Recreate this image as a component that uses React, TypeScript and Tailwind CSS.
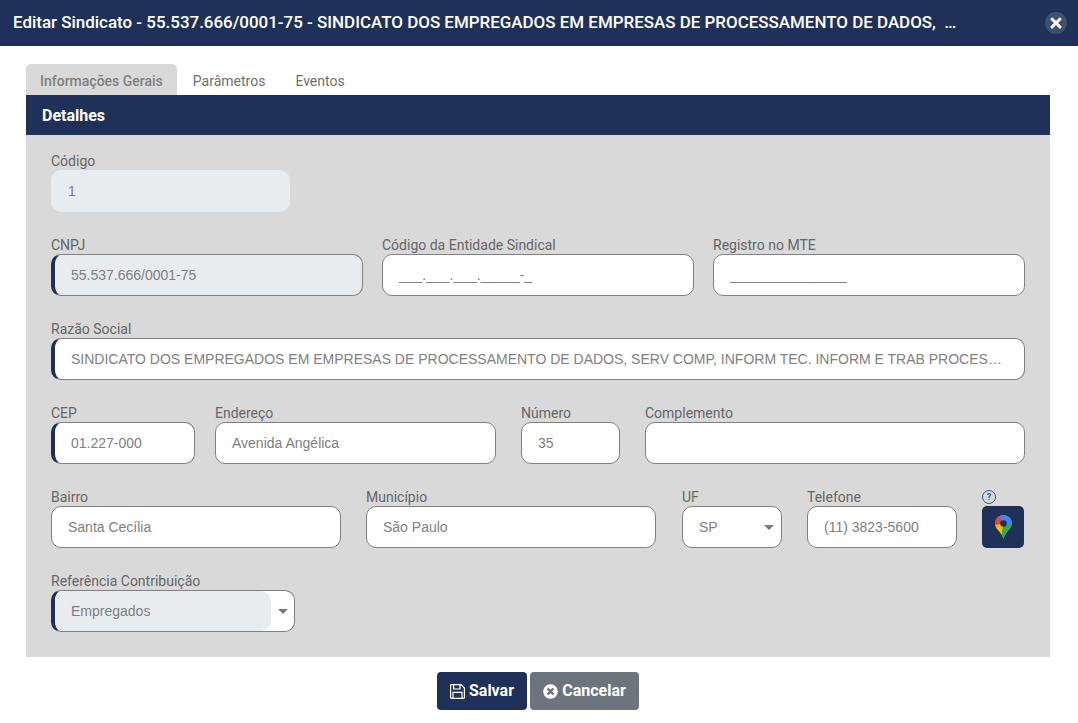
import { X } from "lucide-react";
import { FaTimesCircle } from "react-icons/fa";

const font = { fontFamily: "Roboto, sans-serif" };
const valueFont = "font-['Liberation_Sans',Arial,sans-serif]";

interface FieldProps {
  label: string;
  value?: string;
  width: string;
  required?: boolean;
  disabled?: boolean;
}

const Label = ({ text }: { text: string }) => (
  <label className="h-[20px] text-[14px] leading-[22px] text-[#666666]">{text}</label>
);

const Field = ({ label, value = "", width, required, disabled }: FieldProps) => (
  <div className={`flex flex-col ${width}`}>
    <Label text={label} />
    <input
      readOnly
      value={value}
      className={`h-[42px] w-full rounded-[10px] border border-[#808080] pl-[16px] pr-[22px] text-[14px] text-[#808080] outline-none truncate ${valueFont} ${
        required ? "border-l-4 border-l-[#1f3158]" : ""
      } ${disabled ? "bg-[#e9ecef]" : "bg-white"}`}
    />
  </div>
);

const Caret = () => (
  <span className="h-0 w-0 border-x-[5px] border-t-[5px] border-x-transparent border-t-[#7a7a7a]" />
);

const MapsPin = () => (
  <svg width="17" height="24" viewBox="0 0 17 24">
    <defs>
      <clipPath id="pin">
        <path d="M8.5 0C13.2 0 17 3.8 17 8.5C17 14 11 16 8.5 24C6 16 0 14 0 8.5C0 3.8 3.8 0 8.5 0Z" />
      </clipPath>
    </defs>
    <g clipPath="url(#pin)">
      <rect width="17" height="24" fill="#34a853" />
      <polygon points="2,0 17,0 17,8 8.5,8.5" fill="#4285f4" />
      <polygon points="0,0 4,0 8.5,8.5 0,11" fill="#ea4335" />
      <polygon points="0,10 8.5,8.5 6,24 0,24" fill="#fbbc04" />
      <polygon points="8.5,8.5 13,13 8.5,24 6,24" fill="#34a853" />
    </g>
    <circle cx="8.5" cy="8.5" r="3.3" fill="#1f3158" />
  </svg>
);

const SaveIcon = () => (
  <svg width="15" height="15" viewBox="0 0 15 15" fill="none" stroke="currentColor" strokeWidth="1.2">
    <path d="M1.1 0.6H11L14.4 4V13.4a1 1 0 0 1-1 1H1.6a1 1 0 0 1-1-1V1.1a.5.5 0 0 1 .5-.5Z" />
    <path d="M3.6 0.6V5H10V0.6" />
    <path d="M3 14.4V8.4H12V14.4" />
  </svg>
);

export default function App() {
  return (
    <div className="min-h-[723px] bg-white" style={font}>
      <header className="flex h-[46px] items-center justify-between bg-[#1f3158] pl-[13px] pr-[11px]">
        <h1 className="truncate text-[16.95px] font-medium text-white">
          Editar Sindicato - 55.537.666/0001-75 - SINDICATO DOS EMPREGADOS EM EMPRESAS DE PROCESSAMENTO DE DADOS,{"\u00a0\u00a0"}…
        </h1>
        <button className="flex h-[22px] w-[22px] items-center justify-center rounded-full bg-white/15">
          <X size={16} strokeWidth={4.5} className="text-white" />
        </button>
      </header>

      <main className="pl-[26px] pr-[28px] pt-[18px]">
        <nav className="flex h-[31px] gap-[2px] text-[14px] leading-[35px] text-[#6f6f6f]">
          <span className="rounded-t-[5px] bg-[#d9d9d9] px-[14px] font-medium text-[#808080]">Informações Gerais</span>
          <span className="px-[14px]">Parâmetros</span>
          <span className="px-[14px]">Eventos</span>
        </nav>

        <div className="flex h-[40px] items-center bg-[#1f3158] px-[16px] pt-[2px] text-[16px] font-bold text-white">Detalhes</div>

        <section className="flex flex-col gap-[22px] bg-[#d9d9d9] pb-[25px] pl-[25px] pr-[25px] pt-[15px]">
          <div className="flex w-[239px] flex-col">
            <Label text="Código" />
            <input
              readOnly
              value="1"
              className={`h-[42px] w-full rounded-[10px] bg-[#e9ecef] pl-[17px] text-[14px] text-[#808080] outline-none ${valueFont}`}
            />
          </div>

          <div className="flex gap-[19px]">
            <Field label="CNPJ" value="55.537.666/0001-75" width="w-[312px]" required disabled />
            <Field label="Código da Entidade Sindical" value="___.___.___._____-_" width="w-[312px]" />
            <Field label="Registro no MTE" value="_______________" width="w-[312px]" />
          </div>

          <Field
            label="Razão Social"
            value="SINDICATO DOS EMPREGADOS EM EMPRESAS DE PROCESSAMENTO DE DADOS, SERV COMP, INFORM TEC. INFORM E TRAB PROCESSAMENTO"
            width="w-[974px]"
            required
          />

          <div className="flex">
            <Field label="CEP" value="01.227-000" width="w-[144px] mr-[20px]" required />
            <Field label="Endereço" value="Avenida Angélica" width="w-[281px] mr-[25px]" />
            <Field label="Número" value="35" width="w-[99px] mr-[25px]" />
            <Field label="Complemento" width="w-[380px]" />
          </div>

          <div className="flex">
            <Field label="Bairro" value="Santa Cecília" width="w-[290px] mr-[25px]" />
            <Field label="Município" value="São Paulo" width="w-[290px] mr-[26px]" />
            <div className="mr-[25px] flex w-[100px] flex-col">
              <Label text="UF" />
              <div className={`flex h-[42px] items-center justify-between rounded-[10px] border border-[#808080] bg-white pl-[16px] pr-[7px] text-[14px] text-[#808080] ${valueFont}`}>
                <span>SP</span>
                <Caret />
              </div>
            </div>
            <Field label="Telefone" value="(11) 3823-5600" width="w-[150px] mr-[25px]" />
            <div className="flex w-[42px] flex-col">
              <div className="flex h-[20px] items-center pt-[2px]">
                <span className="flex h-[14px] w-[14px] items-center justify-center rounded-full border border-[#2a5a9a] text-[9px] font-bold leading-none text-[#2a5a9a]">
                  ?
                </span>
              </div>
              <button className="flex h-[42px] w-[42px] items-center justify-center rounded-[5px] bg-[#1f3158]">
                <MapsPin />
              </button>
            </div>
          </div>

          <div className="flex w-[244px] flex-col">
            <Label text="Referência Contribuição" />
            <div className={`flex h-[42px] items-center overflow-hidden rounded-[10px] border border-l-4 border-[#808080] border-l-[#1f3158] bg-white text-[14px] text-[#808080] ${valueFont}`}>
              <span className="flex h-full w-[216px] items-center rounded-[10px] bg-[#e9ecef] pl-[16px]">Empregados</span>
              <span className="ml-[7px] flex">
                <Caret />
              </span>
            </div>
          </div>
        </section>

        <div className="flex justify-center gap-[3px] pt-[15px]">
          <button className="flex h-[38px] w-[90px] items-center justify-center gap-[4px] rounded-[4px] bg-[#1f3158] text-[16px] font-bold text-white">
            <SaveIcon />
            Salvar
          </button>
          <button className="flex h-[38px] w-[109px] items-center justify-center gap-[4px] rounded-[4px] bg-[#6c757d] text-[16px] font-bold text-white">
            <FaTimesCircle size={15} />
            Cancelar
          </button>
        </div>
      </main>
    </div>
  );
}
